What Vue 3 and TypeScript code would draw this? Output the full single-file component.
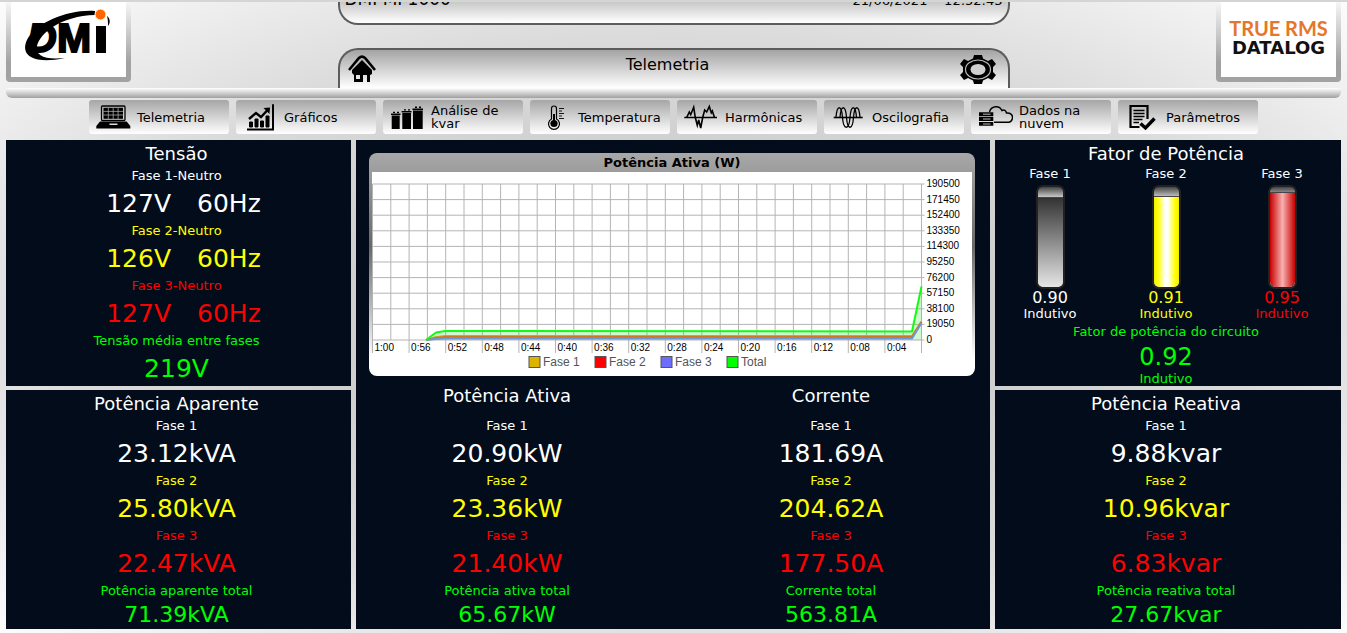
<script setup lang="ts">
type Tone = 'white' | 'yellow' | 'red' | 'green'

interface Reading {
  label: string
  values: string[]
  tone: Tone
}

interface ReadingGroup {
  title: string
  readings: Reading[]
}

const tones: Tone[] = ['white', 'yellow', 'red', 'green']

function group(title: string, labels: string[], values: string[][]): ReadingGroup {
  return {
    title,
    readings: labels.map((label, i) => ({ label, values: values[i], tone: tones[i] })),
  }
}

const tensao = group(
  'Tensão',
  ['Fase 1-Neutro', 'Fase 2-Neutro', 'Fase 3-Neutro', 'Tensão média entre fases'],
  [['127V', '60Hz'], ['126V', '60Hz'], ['127V', '60Hz'], ['219V']],
)
const aparente = group(
  'Potência Aparente',
  ['Fase 1', 'Fase 2', 'Fase 3', 'Potência aparente total'],
  [['23.12kVA'], ['25.80kVA'], ['22.47kVA'], ['71.39kVA']],
)
const ativa = group(
  'Potência Ativa',
  ['Fase 1', 'Fase 2', 'Fase 3', 'Potência ativa total'],
  [['20.90kW'], ['23.36kW'], ['21.40kW'], ['65.67kW']],
)
const corrente = group(
  'Corrente',
  ['Fase 1', 'Fase 2', 'Fase 3', 'Corrente total'],
  [['181.69A'], ['204.62A'], ['177.50A'], ['563.81A']],
)
const reativa = group(
  'Potência Reativa',
  ['Fase 1', 'Fase 2', 'Fase 3', 'Potência reativa total'],
  [['9.88kvar'], ['10.96kvar'], ['6.83kvar'], ['27.67kvar']],
)
const centerGroups = [ativa, corrente]

const gauges: { label: string; value: number; tone: Tone }[] = [
  { label: 'Fase 1', value: 0.9, tone: 'white' },
  { label: 'Fase 2', value: 0.91, tone: 'yellow' },
  { label: 'Fase 3', value: 0.95, tone: 'red' },
]

const menu = [
  { id: 'telemetria', label: 'Telemetria' },
  { id: 'graficos', label: 'Gráficos' },
  { id: 'kvar', label: 'Análise de kvar' },
  { id: 'temperatura', label: 'Temperatura' },
  { id: 'harmonicas', label: 'Harmônicas' },
  { id: 'oscilografia', label: 'Oscilografia' },
  { id: 'nuvem', label: 'Dados na nuvem' },
  { id: 'parametros', label: 'Parâmetros' },
]

const plot = { left: 0.5, top: 12, step: 18.3, row: 15.6, columns: 30, rows: 10 }
const bottom = plot.top + plot.row * plot.rows
const right = plot.left + plot.step * plot.columns
const xs = Array.from({ length: plot.columns + 1 }, (_, i) => plot.left + i * plot.step)
const ys = Array.from({ length: plot.rows + 1 }, (_, i) => plot.top + i * plot.row)
const xTicks = Array.from({ length: 15 }, (_, i) => {
  const minutes = 60 - i * 4
  return {
    x: plot.left + i * 2 * plot.step,
    text: minutes === 60 ? '1:00' : `0:${String(minutes).padStart(2, '0')}`,
  }
})
const yTicks = ys.map((y, i) => ({ y, text: String(190500 - i * 19050) }))
const legend = [
  { x: 157, text: 'Fase 1', color: '#dcb400' },
  { x: 223, text: 'Fase 2', color: '#ff0000' },
  { x: 289, text: 'Fase 3', color: '#6c6cff' },
  { x: 355, text: 'Total', color: '#00ff00' },
]
</script>

<template>
  <div class="page">
    <header class="header">
      <div class="logo-frame">
        <svg class="logo" viewBox="0 0 115 75" role="img" aria-label="DMI">
          <g font-family="'Liberation Sans', Arial, sans-serif" font-weight="700" fill="#000" stroke="#000">
            <text x="16" y="50" font-size="41" font-style="italic" stroke-width="2">D</text>
            <text x="46" y="50" font-size="41" stroke-width="2">M</text>
          </g>
          <rect x="85" y="24" width="10" height="27" />
          <path d="M84 9 C58 7 27 20 17 36 C8 52 20 63 54 56 C34 58 24 54 26 44 C29 31 50 14 84 13 Z" />
          <path d="M96 14 C100 17 99 22 97 24 C97 20 97 18 96 14 Z" />
          <circle cx="89.500" cy="12.500" r="5.500" fill="#f60" stroke="#fff" stroke-width="1" />
        </svg>
      </div>
      <div class="header-center">
        <div class="status">
          <div class="status-line">
            <span class="device">DMI MP1000</span>
            <time class="clock"><span>21/06/2021</span><span>-</span><span>12:52:43</span></time>
          </div>
        </div>
        <div class="title-bar">
          <button class="icon-button" type="button" aria-label="Início">
            <svg width="28" height="28" viewBox="0 0 28 28">
              <path d="M1 15 L11 3 Q14 0 17 3 L27 15" fill="none" stroke="#000" stroke-width="2.600" />
              <path d="M4 15 L14 5 L24 15 L24 19 L22 20 V27 H19 V20 H15 V27 H6 V20 L4 18 Z M8 20 V24 H12 V20 Z" fill-rule="evenodd" />
            </svg>
          </button>
          <h1 class="page-title">Telemetria</h1>
          <button class="icon-button" type="button" aria-label="Configurações">
            <svg width="36" height="30" viewBox="0 0 36 30">
              <path d="M14 1 H22 L23 4.500 L28 7 L32 5 L36 10 L33 13 V18 L36 21 L32 26 L28 24 L23 26.500 L22 30 H14 L13 26.500 L8 24 L4 26 L0 21 L3 18 V13 L0 10 L4 5 L8 7 L13 4.500 Z" />
              <ellipse cx="18" cy="15.500" rx="12.500" ry="9.500" fill="none" stroke="#b8b8b8" stroke-width="1.200" />
              <ellipse cx="18" cy="15.500" rx="7.500" ry="5.500" fill="#d0d0d0" />
            </svg>
          </button>
        </div>
      </div>
      <div class="logo-frame">
        <div class="datalog">
          <span class="true-rms">TRUE RMS</span>
          <span class="datalog-name">DATALOG</span>
        </div>
      </div>
    </header>

    <div class="rail"></div>

    <nav class="menu">
      <button v-for="item in menu" :key="item.id" class="menu-button" type="button">
        <svg class="menu-icon" viewBox="0 0 36 28" fill="none" stroke="#000" stroke-width="1.500">
          <template v-if="item.id === 'telemetria'">
            <rect x="6.500" y="3" width="23.500" height="14.500" rx="1" stroke-width="1.300" />
            <rect x="8.500" y="4.800" width="19.500" height="11" fill="#000" stroke="none" />
            <path d="M13.300 5 V16 M18.200 5 V16 M23.100 5 V16 M8.500 8.400 H28 M8.500 12 H28" stroke="#bbb" stroke-width="0.700" />
            <path d="M5 18.500 H31.700 L35.300 23 V25.500 H1.300 V23 Z" fill="#000" stroke="none" />
            <rect x="14.500" y="20.500" width="8" height="1.500" fill="#ddd" stroke="none" />
          </template>
          <template v-else-if="item.id === 'graficos'">
            <path d="M5 26.500 H31 V1.300" stroke-width="2" />
            <path d="M7.500 24 V19 H10.500 V24 Z M13 24 V16 H16 V24 Z M18.500 24 V18 H21.500 V24 Z M24 24 V13 H27 V24 Z" fill="#000" stroke-width="1" />
            <path d="M7 16 L14 10 L19 14 L26.500 6" stroke-width="2.400" />
            <path d="M21.500 5 L28 4.500 L27.500 11 Z" fill="#000" stroke="none" />
          </template>
          <template v-else-if="item.id === 'kvar'">
            <g fill="#000" stroke="none">
              <path d="M2 10.500 H11.500 V12 H2 Z M2.700 12.500 H10.700 V26 H2.700 Z M4 8.800 H6 V10 H4 Z M8 8.800 H10 V10 H8 Z" />
              <path d="M12.600 8 H22.500 V9.500 H12.600 Z M13.300 10 H22 V26 H13.300 Z M15 6.200 H17 V7.500 H15 Z M19 6.200 H21 V7.500 H19 Z" />
              <path d="M23.500 5.500 H34 V7 H23.500 Z M24 7.500 H33.700 V26 H24 Z M26 3.500 H28 V5 H26 Z M30 3.500 H32 V5 H30 Z" />
            </g>
          </template>
          <template v-else-if="item.id === 'temperatura'">
            <path d="M15.500 16 V5.500 A2.500 2.500 0 0 1 20.500 5.500 V16 A5.500 5.500 0 1 1 15.500 16 Z" stroke-width="1.200" />
            <circle cx="18" cy="20.500" r="3.600" fill="#000" stroke="none" />
            <path d="M18 21 V11" stroke-width="2" />
            <path d="M23 5.500 H28 M23 8 H26 M23 10.500 H28 M23 13 H26 M23 15.500 H28" stroke-width="0.900" />
          </template>
          <template v-else-if="item.id === 'harmonicas'">
            <path d="M1.300 14.500 H34" stroke-width="1.400" />
            <path d="M3.700 14.500 L6.300 9 L7.700 11.700 L10.700 4.300 L12.300 14.500 L14.300 22.300 L15.700 17 L17.700 25 L19.700 14.500 L21.700 7 L23.700 9 L26.300 3.500 L28.300 9.700 L29.300 8 L31.500 14.500" stroke-width="1.600" />
          </template>
          <template v-else-if="item.id === 'oscilografia'">
            <path d="M3.700 14.500 H32.700" stroke-width="1.600" />
            <path d="M6 14.500 C7 1.500 11.500 1.500 12.500 14.500 C13.500 27.500 19 27.500 20 14.500 C21 1.500 25.500 1.500 26.500 14.500" stroke-width="1.300" />
            <path d="M10 14.500 C11 1.500 15.500 1.500 16.500 14.500 C17.500 27.500 22.500 27.500 23.500 14.500 C24.500 1.500 29 1.500 30 14.500" stroke-width="1.300" />
          </template>
          <template v-else-if="item.id === 'nuvem'">
            <path d="M2 9.300 H16.300 V13.200 H2 Z M2 14.100 H16.300 V18 H2 Z M2 18.900 H16.300 V22.800 H2 Z" fill="#000" stroke="none" />
            <path d="M6 11.200 H13.500 M6 16 H13.500 M6 21 H13.500" stroke="#bbb" stroke-width="1" />
            <path d="M12.500 9 C14 3 22 1.500 25 7.500 C27 6.500 29 7.500 29.500 10 C33 9.500 36 12 35.500 15 C35 18 33 19.300 30 19.300 H17" />
          </template>
          <template v-else>
            <path d="M15.500 24 H6.500 V3 H23.500 V16" stroke-width="2.200" />
            <path d="M9.500 7.500 H20.500 M9.500 10.500 H20.500 M9.500 13.500 H20.500 M9.500 16.500 H18.500 M9.500 19.500 H15" stroke-width="1.500" />
            <path d="M16.500 20.500 L21.500 25 L30.500 15.500" stroke-width="3.400" />
          </template>
        </svg>
        <span class="menu-label">{{ item.label }}</span>
      </button>
    </nav>

    <main class="board">
      <div class="column">
        <section class="panel">
          <h2 class="panel-title">{{ tensao.title }}</h2>
          <div v-for="r in tensao.readings" :key="r.label" class="reading" :class="r.tone">
            <div class="label">{{ r.label }}</div>
            <div class="value" :class="{ pair: r.values.length > 1 }">
              <span v-for="v in r.values" :key="v">{{ v }}</span>
            </div>
          </div>
        </section>
        <section class="panel lower">
          <h2 class="panel-title">{{ aparente.title }}</h2>
          <div v-for="r in aparente.readings" :key="r.label" class="reading" :class="r.tone">
            <div class="label">{{ r.label }}</div>
            <div class="value">{{ r.values[0] }}</div>
          </div>
        </section>
      </div>

      <section class="panel center">
        <figure class="chart">
          <figcaption class="chart-title">Potência Ativa (W)</figcaption>
          <svg class="chart-plot" viewBox="0 0 600 200" font-family="'Liberation Sans', Arial, sans-serif">
            <g stroke="#b4b4b4" stroke-width="1">
              <line v-for="(x, i) in xs" :key="'x' + i" :x1="x" :x2="x" :y1="plot.top" :y2="i % 2 ? bottom : bottom + 13" />
              <line v-for="(y, i) in ys" :key="'y' + i" :x1="plot.left" :x2="right + 3" :y1="y" :y2="y" />
            </g>
            <path d="M54 168 L64 160.500 L73 159 L540 159.500 L549.500 114.500 V168 Z" fill="#00e000" fill-opacity="0.180" />
            <g fill="none" stroke-width="2" stroke-linejoin="round">
              <path d="M54 168 L64 165 L73 164 H540 L549.500 149.500" stroke="#d0a818" />
              <path d="M54 168 L64 166 L73 165 H540 L549.500 150" stroke="#d0761e" />
              <path d="M54 168 L64 167 L73 166.500 H540 L549.500 151" stroke="#6a98d8" />
              <path d="M54 168 L64 160.500 L73 159 L540 159.500 L549.500 114.500" stroke="#12fc12" />
            </g>
            <g font-size="10" fill="#000">
              <text v-for="t in xTicks" :key="t.text" :x="t.x + 2" :y="bottom + 11">{{ t.text }}</text>
              <text v-for="t in yTicks" :key="t.text" :x="right + 5" :y="t.y + 3">{{ t.text }}</text>
            </g>
            <g v-for="l in legend" :key="l.text">
              <rect :x="l.x" y="184.500" width="11" height="11" :fill="l.color" stroke="#555" />
              <text :x="l.x + 14" y="194" font-size="12" fill="#545454">{{ l.text }}</text>
            </g>
          </svg>
        </figure>
        <div class="center-groups">
          <section v-for="g in centerGroups" :key="g.title" class="lower">
            <h2 class="panel-title spaced">{{ g.title }}</h2>
            <div v-for="r in g.readings" :key="r.label" class="reading" :class="r.tone">
              <div class="label">{{ r.label }}</div>
              <div class="value">{{ r.values[0] }}</div>
            </div>
          </section>
        </div>
      </section>

      <div class="column">
        <section class="panel factor">
          <h2 class="panel-title">Fator de Potência</h2>
          <div class="gauges">
            <div v-for="g in gauges" :key="g.label" class="gauge-item" :class="g.tone">
              <div class="gauge-label">{{ g.label }}</div>
              <div class="gauge">
                <div class="gauge-fill" :style="{ height: g.value * 100 + '%' }"></div>
              </div>
              <div class="gauge-value">{{ g.value.toFixed(2) }}</div>
              <div class="gauge-kind">Indutivo</div>
            </div>
          </div>
          <div class="green">
            <div class="label">Fator de potência do circuito</div>
            <div class="factor-value">0.92</div>
            <div class="gauge-kind">Indutivo</div>
          </div>
        </section>
        <section class="panel lower">
          <h2 class="panel-title">{{ reativa.title }}</h2>
          <div v-for="r in reativa.readings" :key="r.label" class="reading" :class="r.tone">
            <div class="label">{{ r.label }}</div>
            <div class="value">{{ r.values[0] }}</div>
          </div>
        </section>
      </div>
    </main>
  </div>
</template>

<style>
body {
  margin: 0;
}
</style>

<style scoped>
.page {
  box-sizing: border-box;
  min-height: 100vh;
  border-top: 2px solid #d4d6d4;
  background: radial-gradient(ellipse farthest-corner at center, #c0c0c0 0%, #dadada 62%, #fcfcfc 100%);
  font-family: Verdana, "DejaVu Sans", sans-serif;
  font-size: 13px;
  color: #000;
}

.header {
  display: grid;
  grid-template-columns: 125px minmax(0, 672px) 125px;
  justify-content: space-between;
  align-items: start;
  padding: 0 6px;
}

.logo-frame {
  padding: 0 5px 5px;
  border-radius: 0 0 4px 4px;
  background: linear-gradient(#f6f6f6, #a2a2a2 75%);
}

.logo {
  display: block;
  width: 100%;
  height: 75px;
  background: #fff;
}

.datalog {
  box-sizing: border-box;
  display: flex;
  flex-direction: column;
  align-items: center;
  height: 75px;
  padding-top: 16px;
  background: #fff;
  font-weight: 700;
  white-space: nowrap;
}

.true-rms {
  font-family: Lato, sans-serif;
  font-size: 20px;
  line-height: 20px;
  color: #e5762b;
}

.datalog-name {
  font-size: 18px;
  line-height: 20px;
  color: #111;
}

.status {
  box-sizing: border-box;
  height: 23px;
  overflow: hidden;
  border: 2px solid #5c5c5c;
  border-top: 0;
  border-radius: 0 0 20px 20px;
  background: linear-gradient(#c8c8c8, #fff);
}

.status-line {
  display: flex;
  justify-content: space-between;
  align-items: baseline;
  margin-top: -13px;
  padding: 0 5px;
  line-height: 20px;
}

.device {
  font-size: 17px;
}

.clock {
  display: flex;
  gap: 6px;
  font-size: 13px;
}

.title-bar {
  box-sizing: border-box;
  display: flex;
  justify-content: space-between;
  height: 40px;
  margin-top: 23px;
  padding: 4px 12px 0 8px;
  border: 2px solid #5c5c5c;
  border-bottom: 0;
  border-radius: 20px 20px 0 0;
  background: linear-gradient(#a4a4a4, #fff);
}

.page-title {
  margin: 0;
  font-size: 16px;
  font-weight: 400;
  line-height: 22px;
}

.icon-button {
  display: block;
  height: 30px;
  padding: 0;
  border: 0;
  background: none;
}

.icon-button svg {
  display: block;
}

.rail {
  height: 10px;
  margin: 0 6px;
  border-radius: 2px 2px 6px 6px;
  background: linear-gradient(#fff, #a0a0a0);
}

.menu {
  display: flex;
  justify-content: center;
  gap: 7px;
  padding: 2px 6px 6px;
}

.menu-button {
  box-sizing: border-box;
  display: flex;
  align-items: center;
  gap: 6px;
  width: 140px;
  height: 34px;
  padding: 0 0 0 6px;
  border: 0;
  border-radius: 3px;
  background: linear-gradient(#a6a6a6, #fff);
  font: inherit;
  line-height: 13px;
  color: #000;
  text-align: left;
}

.menu-icon {
  flex: none;
  width: 36px;
  height: 28px;
}

.board {
  display: grid;
  grid-template-columns: 345fr 634fr 346fr;
  gap: 5px;
  padding: 0 6px 4px;
}

.column {
  display: flex;
  flex-direction: column;
  gap: 4px;
}

.panel {
  padding: 2px 4px 0 0;
  background: #020c1a;
  color: #fff;
  text-align: center;
}

.panel-title {
  margin: 0;
  font-size: 18px;
  font-weight: 400;
  line-height: 24px;
}

.spaced {
  margin-bottom: 8px;
}

.label {
  line-height: 20px;
}

.value {
  font-size: 25px;
  line-height: 35px;
}

.pair {
  display: flex;
  justify-content: center;
  gap: 26px;
  padding-left: 14px;
}

.lower .green .value {
  font-size: 22px;
  line-height: 28px;
}

.white {
  color: #fff;
}

.yellow {
  color: #ff0;
}

.red {
  color: #f00;
}

.green {
  color: #0f0;
}

.center {
  padding: 13px 15px 0 13px;
}

.chart {
  margin: 0;
  padding: 0 3px 4px;
  border-radius: 8px;
  background: linear-gradient(#a8a8a8, #9a9a9a 10%, #686868 42%, #fff 92%);
}

.chart-title {
  font-weight: 700;
  line-height: 19px;
  color: #000;
}

.chart-plot {
  display: block;
  width: 100%;
  background: #fff;
}

.center-groups {
  display: grid;
  grid-template-columns: 1fr 1fr;
  gap: 48px;
  margin-top: 8px;
  padding-right: 6px;
}

.gauges {
  display: flex;
  justify-content: center;
  gap: 35px;
}

.gauge-item {
  width: 81px;
}

.gauge-label {
  line-height: 16px;
  color: #fff;
}

.gauge {
  box-sizing: border-box;
  display: flex;
  align-items: flex-end;
  width: 29px;
  height: 104px;
  margin: 3px auto 0;
  overflow: hidden;
  border: 2px solid #222;
  border-radius: 7px;
  background: linear-gradient(#444, #c8c8c8 10%);
}

.gauge-fill {
  box-sizing: border-box;
  width: 100%;
  border-top: 1px solid #444;
  border-radius: 0 0 5px 5px;
}

.white .gauge-fill {
  background: linear-gradient(#333, #e6e6e6);
}

.yellow .gauge-fill {
  background: linear-gradient(90deg, #f0f000, #ff0 15%, #fff 45%, #fff 55%, #ff0 85%, #f0f000);
}

.red .gauge-fill {
  background: linear-gradient(90deg, #c80000, #f8b0b0 50%, #c80000);
}

.gauge-value {
  font-size: 16px;
  line-height: 18px;
}

.gauge-kind {
  line-height: 14px;
}

.factor .label {
  line-height: 22px;
}

.factor-value {
  font-size: 24px;
  line-height: 29px;
}
</style>
